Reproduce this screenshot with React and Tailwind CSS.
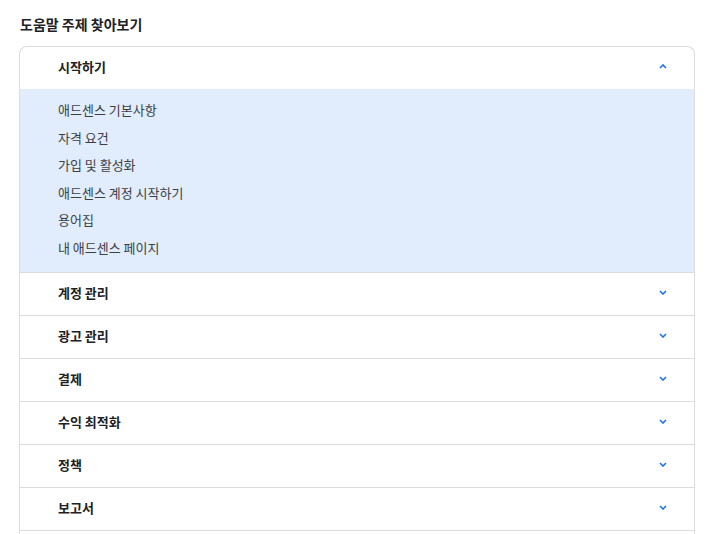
import React from "react";

const subItems = [
  "애드센스 기본사항",
  "자격 요건",
  "가입 및 활성화",
  "애드센스 계정 시작하기",
  "용어집",
  "내 애드센스 페이지",
];

const topics = ["계정 관리", "광고 관리", "결제", "수익 최적화", "정책", "보고서"];

const Chevron = ({ up }) => (
  <svg width="8" height="5" viewBox="0 0 8 5" className={up ? "rotate-180" : ""}>
    <path d="M1 1l3 3 3-3" fill="none" stroke="#1a73e8" strokeWidth="1.6" />
  </svg>
);

const Row = ({ label, up }) => (
  <div className="h-[42px] flex items-center justify-between pl-[38px] pr-[27px] pb-[3px]">
    <span className="text-[13px] font-bold text-[#202124]">{label}</span>
    <Chevron up={up} />
  </div>
);

const App = () => (
  <div className="w-[705px] h-[534px] overflow-hidden bg-white font-['Noto_Sans_CJK_KR','Noto_Sans',sans-serif]">
    <div className="px-[19px] pt-[14px]">
      <h2 className="text-[14px] font-bold text-[#202124] pl-[1px] leading-[20px]">
        도움말 주제 찾아보기
      </h2>
      <div className="mt-[12px] border-x border-t border-[#dadce0] rounded-t-[8px] w-[676px]">
        <Row label="시작하기" up />
        <div className="bg-[#e1edfd] pt-[7px] pb-[11px] pl-[38px]">
          {subItems.map((s) => (
            <div key={s} className="h-[27.5px] flex items-center text-[13px] text-[#3c4043]">
              {s}
            </div>
          ))}
        </div>
        {topics.map((t) => (
          <div key={t} className="border-t border-[#dadce0]">
            <Row label={t} />
          </div>
        ))}
        <div className="border-t border-[#dadce0] h-[20px]" />
      </div>
    </div>
  </div>
);

export default App;
